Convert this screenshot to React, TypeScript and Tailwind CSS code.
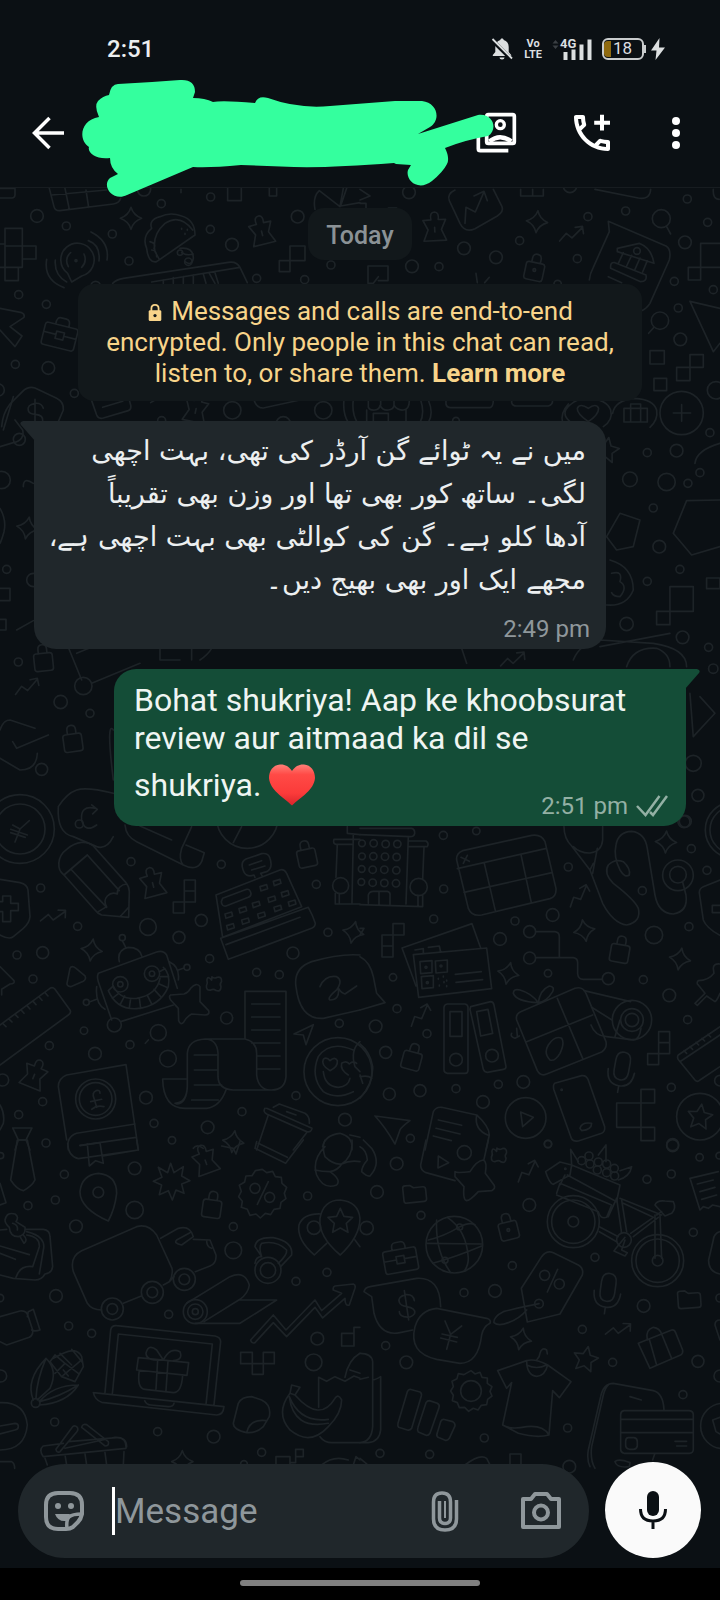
import React from 'react';

// Doodles are drawn at three times their size, tile by tile
const SPARKLE = 'M0-33Q7-9 32 0Q7 9 0 33Q-7 9-32 0Q-7-9 0-33Z';
const PIN = 'M-10-25Q-14-48 2-48Q16-46 12-25L34-24L20 5L34 38L-34 38L-20 5L-34-24ZM0-2V12';
const LOCK =
  'M-28-12Q-28-20-20-20H20Q28-20 28-12V25Q28 33 20 33H-20Q-28 33-28 25ZM-13-20V-32Q-13-46 0-46Q13-46 13-32V-20';
const TREND = 'M-38 18L-15-2L0 14L34-12M14-16H36V6';
const PIXELS = 'M0-50h33v33h-33zM0-17h33v33h-33zM-33 16h33v33h-33z';
const MIC = 'M-22-25Q-22-52 0-52Q22-52 22-25V5Q22 32 0 32Q-22 32-22 5ZM-40 5Q-38 50 0 50Q38 50 40 5M0 50V70';
const STAR = 'M0-38L11-14L37-11L18 7L23 34L0 21L-23 34L-18 7L-37-11L-11-14Z';
const CROSS = 'M-8-10Q-22-24-22-8Q-18 0-22 8Q-22 24-8 20Q0 14 8 20Q22 24 22 8Q16 0 22-8Q22-24 8-20Q0-14-8-20Z';
const CASE =
  'M-50-20Q-50-28-42-28H42Q50-28 50-20V32Q50 40 42 40H-42Q-50 40-50 32ZM-20-28Q-22-50-8-50H8Q22-50 20-28M-50 2H-12M12 2H50M-12-8H12V14H-12Z';
const FOLDER = 'M-34-20Q-34-26-26-26H-12L-2-18H26Q34-18 34-10V18Q34 26 26 26H-26Q-34 26-34 18Z';

type Stamp = [string, number, number, number];

interface Tile {
  x: number;
  y: number;
  dots: number[][];
  stamps: Stamp[];
  paths: string[];
}

const tiles: Tile[] = [
  {
    x: 0,
    y: 180,
    dots: [
      [111, 108, 19], [199, 138, 12], [484, 71, 12], [632, 51, 12], [631, 148, 12], [337, 162, 12], [696, 194, 19],
      [387, 243, 12], [893, 110, 19], [993, 255, 12], [770, 295, 12], [914, 299, 12], [56, 344, 12], [139, 373, 12],
      [46, 553, 12], [145, 564, 19], [223, 640, 12], [697, 691, 26], [970, 691, 26], [-5, 630, 18], [432, 28, 20],
      [485, 722, 12], [850, 732, 22], [228, 242, 3], [565, 245, 11], [540, 218, 8], [287, 318, 14]
    ],
    stamps: [[SPARKLE, 393, 115, 0], [PIN, 785, 155, -14], [CASE, 180, 464, 14], [PIN, 588, 688, 12]],
    paths: [
      'M0 25H45V45Q44 54 36 54H0',
      'M148 25L162 80Q165 93 180 92L340 72Q358 70 362 55M155 45L320 30M195 25L208 88M258 30L266 82',
      'M683 25V62H724V25M808 25V48H830V25M543 28V38',
      'M945 88Q938 50 958 32L1020 80L1030 25M1040 25L1022 78L1080 68',
      'M0 192H15V145H67V198H108V237H67V198H15M67 198V262H0M15 192V302H55V262',
      'M838 242H870V275H838ZM870 198H915V242H870Z',
      'M215 306L203 280A50 50 0 1 1 245 288ZM205 260Q192 235 212 218M252 222Q262 245 245 262',
      'M265 182Q302 195 297 243M273 156Q330 185 321 240M166 240Q162 285 200 306M140 238Q130 300 192 323',
      'M440 205Q425 170 455 145Q445 120 480 110Q510 95 545 108Q585 120 585 165L470 245Q445 250 440 205M465 215Q455 165 495 130Q540 100 578 150M465 215L478 238M450 185Q470 190 462 205M455 210Q470 210 470 230M545 145v3M555 160v3M562 148v3',
      'M540 205Q580 200 580 235Q575 260 555 245M545 218Q560 228 580 222',
      'M338 310Q350 298 370 295L685 247Q710 243 720 262L742 308M455 306L720 262M490 300V310M520 293V310M550 290V310M580 285V310M610 282L618 310M628 280L645 310M645 278L655 310',
      'M0 385L65 398Q75 402 72 412L30 440L66 468L45 500L0 450',
      'M5 740Q8 700 30 672L68 634Q85 618 105 624L170 655Q192 666 190 690L175 725M130 685Q125 668 105 670Q80 675 85 692Q88 702 107 703Q130 706 128 722M105 658V728',
      'M275 662L290 705Q295 718 310 714L385 692Q395 688 392 675L388 660M308 682L368 664M452 668L465 660M762 660Q770 685 790 684L900 660M1032 660Q1028 700 1045 728M1060 660Q1055 700 1072 728'
    ]
  },
  {
    x: 360,
    y: 180,
    dots: [
      [147, 37, 19], [312, 205, 19], [408, 232, 19], [156, 259, 19], [237, 260, 12], [479, 182, 12], [684, 110, 12],
      [652, 236, 12], [797, 93, 12], [982, 57, 12], [1043, 127, 12], [975, 187, 19], [904, 116, 27], [943, 304, 12],
      [1060, 329, 12], [955, 384, 12], [900, 422, 26], [961, 478, 19], [1068, 631, 26], [630, 18, 20], [523, 270, 4],
      [831, 213, 10], [593, 312, 11], [965, 699, 65], [288, 722, 10]
    ],
    stamps: [[SPARKLE, 531, 125, 5], [PIN, 224, 144, -3], [TREND, 634, 160, -8], [LOCK, 524, 268, 12]],
    paths: [
      'M0 28L30 48L0 60M0 70H18V84M85 84H110',
      'M285 30Q260 42 268 62L300 130Q315 160 345 146L412 108Q432 95 426 80L400 28M315 130L318 82L346 96L370 40M342 48L372 34L382 62',
      'M482 28V48H550V28M518 28V48M705 28L835 54Q870 60 872 28M1060 28Q1058 58 1078 58',
      'M920 140L932 162M882 442L866 460',
      'M24 258H84V302H55M24 258V310H40L55 290M348 280L352 308M388 292L374 308',
      'M688 300Q690 280 700 262L748 155L745 124L918 198Q935 208 928 240L870 370Q860 386 845 392',
      'M772 205L838 190Q875 205 882 250L772 215ZM790 218L775 250M815 226L800 258M840 234L825 268M862 242L848 276M765 248L858 285Q862 305 842 305L752 265Q750 245 765 248M745 290L785 308',
      'M1080 190H1022V262H985V300H1022V262H1080M1022 262V300',
      'M990 364L1060 515L1080 490M990 364L1080 385',
      'M870 512H913V552H870ZM990 524H1030V562H990ZM950 562H990V602H950ZM882 595H920V632H882Z',
      'M25 662V682Q30 692 45 690Q58 688 60 676Q68 692 85 690Q100 688 102 676Q112 692 130 690Q148 688 148 662M62 662V676M102 662V676M20 690V726M138 690V726M40 722V700H85V726',
      'M182 660Q195 700 180 728M205 660Q222 700 205 728M258 660V672Q260 683 272 683H390Q400 680 400 660M455 660V668Q458 678 470 678H565Q578 675 578 660',
      'M630 725Q600 700 630 675Q650 655 685 655Q740 658 752 690Q760 720 730 740M758 700Q765 660 825 655Q880 658 890 690Q895 720 870 742M608 728Q600 700 625 672',
      'M685 725Q650 700 652 685Q660 668 685 685Q708 668 716 685Q716 705 685 725M792 685H862V726H792ZM812 685V726M842 685V726M812 685V672H842V685M940 699H992M965 674V724'
    ]
  },
  {
    x: 0,
    y: 820,
    dots: [
      [238, 12, 12], [393, 125, 12], [664, 133, 12], [122, 204, 12], [233, 319, 12], [444, 321, 25], [604, 301, 18],
      [537, 352, 18], [51, 405, 12], [128, 398, 18], [99, 477, 12], [629, 416, 12], [879, 399, 18], [984, 337, 12],
      [949, 193, 12], [770, 457, 12], [838, 464, 12], [680, 594, 18], [252, 632, 11], [148, 677, 12], [285, 701, 19],
      [390, 674, 12], [475, 638, 24], [504, 716, 25], [438, 833, 19], [128, 845, 12], [56, 884, 12], [138, 969, 12],
      [462, 910, 12], [516, 961, 11], [623, 922, 19], [726, 875, 12], [888, 827, 12], [1018, 610, 12], [1035, 899, 19],
      [8, 780, 18], [60, 27, 75], [60, 27, 103], [742, -7, 92], [1022, 197, 24], [361, 493, 23], [361, 493, 8],
      [456, 461, 23], [456, 461, 8], [343, 615, 21], [367, 353, 9], [561, 442, 9], [259, 547, 9], [287, 837, 60],
      [287, 837, 49], [1014, 755, 102]
    ],
    stamps: [
      [PIN, 458, 190, -15], [TREND, 160, 286, 2], [PIXELS, 553, 230, 0], [LOCK, 920, 108, -12], [SPARKLE, 275, 390, 8],
      [SPARKLE, 1060, 337, 12], [CROSS, 642, 491, 5], [PIN, 103, 765, 22], [SPARKLE, 700, 965, 8]
    ],
    paths: [
      'M38 15L60 27L88 2M60 27L45 66M32 28L82 45M32 38L76 52',
      'M262 105L192 165C170 150 170 110 200 88C230 62 262 62 280 78L378 188Q388 200 388 215L386 292L305 285Q292 280 285 270L192 165M215 150L320 262M262 105L358 212M295 275L320 260C305 235 330 212 352 222C350 205 365 193 380 192M386 262L362 288',
      'M0 178L60 188Q82 194 84 210L90 290Q88 310 70 325L40 350Q28 360 0 345M0 245H8V228H32V250H55V272H32V305H8V275H0',
      'M375 15Q378 50 410 65L550 135Q590 155 605 125L613 98L558 75M575 20L545 85Q535 120 550 135M420 18L515 60M725 20L700 68',
      'M648 225L840 150Q852 146 860 160L905 260L668 352ZM662 355L925 262Q938 285 946 310Q946 320 935 325L685 418ZM678 374L900 292M765 172L762 165Q735 175 728 145Q722 125 738 117L785 101Q805 98 810 115Q820 145 800 155L782 160L788 170M748 135L785 122M755 150L795 138',
      'M668 235L740 208Q750 206 753 220Q754 228 745 232L678 258Q665 260 664 245ZM780 200l20-6 3 12-20 7zM820 184l20-6 3 12-20 7zM804 234l20-6 3 12-20 7zM844 218l20-6 3 12-20 7zM757 250l20-6 3 12-20 7zM717 266l20-6 3 12-20 7zM675 282l20-6 3 12-20 7zM865 246l20-6 3 12-20 7zM822 262l20-6 3 12-20 7zM773 282l20-6 3 12-20 7zM725 300l20-6 3 12-20 7zM680 317l20-6 3 12-20 7z',
      'M1002 58Q998 72 1008 73H1056M1080 58H1002M1012 73L1008 172M1060 45L1056 252M1006 220V252H1080M1018 222V252M1042 20V40L1080 44',
      'M295 460L470 396Q490 390 500 405L532 505M295 460Q290 470 295 485L335 600M362 605L520 555M358 425Q350 390 385 382Q420 382 426 410M367 362L378 384M508 425Q540 440 535 480M535 450L552 444M290 500Q285 550 315 568M268 546L290 538',
      'M325 512Q350 570 410 566Q480 560 505 500Q512 460 490 442M340 498Q360 540 410 535Q470 525 480 475M325 512L340 498M337 535L356 520M360 555L374 528M388 564L392 536M422 565L418 534M455 552L442 526M482 530L462 508M500 502L478 492M506 470L482 470M495 446L478 455',
      'M512 525L552 522Q565 518 572 505Q590 485 600 500V545L626 572Q630 585 615 585L575 582Q560 590 552 605Q542 618 536 602L535 565L512 540Q505 528 512 525',
      'M210 445Q215 435 228 445L255 468Q260 478 250 484L212 500Q200 498 201 490Z',
      'M0 440L42 482Q45 492 30 492L5 508V525M0 615L150 505Q158 500 165 508L210 570Q215 578 205 585L0 735M10 612L18 620M28 598L36 606M46 584L54 592M64 571L72 580M82 558L90 567M100 545L108 554M118 532L126 541M136 519L144 528',
      'M735 514H858V770Q855 810 815 810H700Q655 808 654 770V700Q652 658 615 657Q565 660 562 700V800Q560 850 525 850M615 657H735Q770 665 770 700V765Q775 808 810 810M735 514V657M755 552H840M755 591H840M755 630H840M755 669H840M772 708H840M772 747H840M562 777H488Q490 865 555 865H620Q660 860 678 810M583 705H652M583 750H652M583 795H665M575 840H655M530 852Q560 850 562 800',
      'M1080 405Q1020 400 935 425Q880 445 888 500Q900 600 970 595L1080 570M960 500Q975 465 1010 470Q1030 480 1010 510Q980 535 990 540Q1020 540 1015 505Q1025 520 1035 522L1070 498',
      'M882 642L940 614L918 674L910 645ZM445 660L436 670',
      'M1060 690Q990 660 955 710Q930 770 970 815Q1010 840 1060 815M970 755Q975 800 1015 802Q1045 800 1050 775M990 752Q962 735 970 718Q980 710 990 722Q1005 708 1012 722Q1015 740 990 752M1045 765Q1020 750 1025 730Q1040 720 1048 732Q1060 720 1070 730M1080 665Q1050 690 1065 740L1080 755',
      'M200 960L175 800Q175 775 200 765L378 734L415 990M205 990Q198 950 230 940L405 912M240 976L408 952M300 820Q300 808 288 812Q275 818 282 835L290 862M272 845L305 838M275 868Q290 855 312 860',
      'M38 924H96L78 960H55ZM55 960L45 990M78 960L90 990M0 855Q15 880 10 910L0 930',
      'M795 865Q788 875 800 882L920 935Q935 938 936 925L800 865M820 862L838 852L915 880Q930 890 928 910M805 885L770 990M920 938L880 990M860 875L888 885M580 985Q590 970 610 985M968 980Q975 945 1020 940Q1060 950 1056 990M1050 945L1080 952'
    ]
  },
  {
    x: 360,
    y: 820,
    dots: [
      [250, 46, 12], [349, 33, 11], [251, 207, 12], [221, 297, 12], [420, 357, 19], [465, 303, 12], [578, 285, 19],
      [625, 141, 12], [847, 212, 12], [994, 86, 12], [1041, 151, 12], [987, 320, 12], [882, 345, 26], [99, 472, 11],
      [509, 335, 18], [509, 414, 18], [745, 476, 18], [564, 460, 11], [850, 479, 12], [928, 526, 19], [983, 599, 12],
      [111, 566, 12], [47, 619, 19], [201, 641, 12], [77, 697, 18], [88, 822, 18], [180, 812, 18], [288, 806, 12],
      [415, 793, 12], [490, 786, 19], [369, 846, 19], [151, 955, 12], [564, 972, 11], [934, 802, 12], [938, 974, 18],
      [176, 201, 26], [288, 719, 19], [396, 707, 19], [497, 894, 61], [1020, 890, 70], [816, 600, 59], [816, 600, 34],
      [816, 600, 20], [954, 166, 46], [954, 164, 25], [1120, 30, 84], [1120, 30, 70], [972, 5, 18], [6, 70, 10],
      [41, 70, 11], [77, 72, 11], [112, 72, 11], [6, 109, 10], [40, 109, 11], [75, 110, 11], [110, 111, 11], [5, 147, 10],
      [38, 149, 11], [73, 149, 11], [109, 151, 11], [4, 186, 10], [38, 188, 11], [73, 189, 11], [108, 190, 11],
      [198, 442, 3], [243, 438, 3], [202, 488, 3], [605, 809, 2], [1080, 782, 16]
    ],
    stamps: [
      [SPARKLE, 918, 66, 3], [SPARKLE, 673, 332, -10], [SPARKLE, 445, 460, 12], [SPARKLE, 960, 417, 10],
      [TREND, 655, 226, -30], [TREND, 178, 584, -30], [PIXELS, 896, 685, 0], [LOCK, 780, 394, 10], [LOCK, 156, 716, 15],
      [MIC, 785, 748, 10], [STAR, 1020, 890, 8]
    ],
    paths: [
      'M0 25H155Q165 28 164 40Q163 50 150 50L0 44M145 50L138 252M148 63H198Q208 70 202 80H148M192 82L188 178M0 254L188 260V225M174 226V260M25 250V225Q28 214 40 214H82Q92 216 90 228V252M57 214V252',
      'M290 120Q288 100 308 92L515 46Q545 42 555 65L588 205Q590 230 570 236L365 285Q335 290 325 265ZM292 146L556 86M312 217L576 158M373 130L406 272M483 104L514 248M303 112L328 124M322 106L310 130',
      'M612 20Q612 55 635 78L690 150L728 250Q760 310 800 315Q845 305 835 265Q825 240 760 190Q730 160 745 135Q765 115 790 125Q812 145 808 165Q795 175 780 150Q760 110 768 75Q775 35 815 34Q855 38 862 85L885 225Q895 280 940 282Q985 275 978 225L968 186M728 20V60Q725 95 690 99Q660 100 640 80M712 85L698 160M690 150L700 130',
      'M66 345H99V411H66ZM66 378H99M99 311H132V345H99ZM0 325L12 325L0 345',
      'M168 498L126 384L336 311L362 384M160 404L380 384L395 506L176 532ZM180 425L216 422V458L182 461ZM226 423L262 420V456L228 459ZM184 470L220 467V503L186 506ZM286 463L364 455M288 487L368 479M165 390L190 386V400M205 382L238 378L242 396M235 475v3M250 468v3M260 480v3M238 495v3M252 485v3M260 497v3',
      'M527 335H585Q598 337 598 350V413M527 413H640Q653 415 653 428V462Q655 478 670 478H727',
      'M262 552H315Q324 554 324 562V750Q324 760 315 760H262Q252 758 252 750V562Q253 553 262 552ZM270 575H306V649H270ZM332 560L392 545Q400 545 402 555L438 740Q438 747 430 748L382 757Q373 757 370 748L330 568ZM350 575L384 568L398 640L362 648Z',
      'M470 600Q466 582 482 575L645 505Q668 498 678 520L738 665Q742 685 725 696L560 762Q542 770 532 752ZM498 666L698 585M592 535L668 715M535 548Q470 545 460 520Q460 505 480 510Q515 520 535 548Q540 510 568 498Q585 500 578 515Q560 545 535 548M570 720Q550 700 565 675Q585 645 605 655Q615 670 600 700Q585 725 570 720M470 625L472 648M455 640Q450 650 465 655L478 648',
      'M672 512L812 545M695 562L756 600M693 615Q705 648 740 650L820 660Q838 660 843 625M765 650L780 600',
      'M0 410Q30 425 40 470L50 520L75 548L0 570M0 672Q30 695 38 740Q40 790 0 835M0 770Q25 765 35 775M0 765L8 790',
      'M482 876L520 892L488 920ZM584 790L665 767Q678 765 684 778L734 920Q736 935 725 940L655 963Q640 966 634 955L582 810Q578 795 584 790M660 925Q665 905 695 910Q695 930 665 932Z',
      'M770 849H843V922H770ZM843 808H884V849H843ZM843 922H884V962H843Z',
      'M45 888L150 902Q125 920 120 930L105 972Q75 920 45 888',
      'M195 990L220 875Q228 860 245 862L350 885Q388 920 388 945L378 990M350 885Q342 930 385 946M235 900L305 916M228 925L300 942M220 948L274 962',
      'M1080 180L1030 200Q1018 205 1018 218L1030 300Q1040 325 1080 346M1080 256H1057V278H1080M1080 432Q1060 430 1060 445L1062 460Q1045 482 1015 482Q1008 490 1015 495L1035 520L1005 550L1012 556L1040 528L1065 545Q1072 540 1080 520',
      'M1080 620L955 705Q950 712 956 720L1005 780Q1012 788 1020 780L1080 740M962 724L1080 645M972 692L980 700M990 680L998 688M1008 667L1016 675M1026 655L1034 663M1044 643L1052 651'
    ]
  },
  {
    x: 0,
    y: 1140,
    dots: [
      [193, 103, 12], [84, 197, 12], [166, 180, 12], [404, 85, 19], [404, 210, 26], [228, 259, 19], [168, 468, 19],
      [506, 523, 12], [206, 558, 12], [275, 580, 12], [700, 260, 12], [700, 331, 25], [923, 168, 12], [981, 397, 12],
      [888, 424, 12], [952, 596, 19], [941, 667, 25], [164, 846, 12], [473, 875, 12], [641, 890, 19], [785, 937, 12],
      [2, 708, 18], [0, 474, 11], [2, 47, 9], [295, 157, 16], [765, 145, 15], [809, 172, 15], [337, 507, 33], [337, 507, 16],
      [457, 457, 33], [457, 457, 16], [553, 418, 33], [553, 418, 16], [586, 515, 36], [586, 515, 23], [586, 515, 9],
      [804, 391, 39], [804, 391, 23], [942, 263, 20], [107, 789, 13], [732, 972, 10]
    ],
    stamps: [[PIN, 616, 62, -20], [LOCK, 636, 200, 8], [STAR, 1021, 243, 0], [SPARKLE, 547, 965, 0]],
    paths: [
      'M52 0L32 120Q50 148 70 152Q95 140 105 120L82 0ZM0 130L18 188L0 195',
      'M203 10Q205 50 235 56L415 30L410 0M240 17L300 8M262 12L268 78L287 62L310 70L300 8M310 48L415 30',
      'M325 243Q240 205 240 155Q245 105 295 100Q350 105 350 160Q345 205 325 243',
      'M512 70L522 98L550 80L545 108L570 122L545 132L552 160L528 150L517 180L505 152L478 164L485 135L460 124L486 112L475 82L503 98Z',
      'M787 88L800 98L818 94L826 110L844 112L846 130L860 142L853 160L858 176L843 187L840 205L822 208L812 224L796 220L781 234L768 222L750 226L742 208L724 202L727 184L716 170L724 154L718 136L734 126L738 108L756 107L766 92ZM805 125L772 193',
      'M770 5L765 25L857 70L910 0M775 10L862 52M975 0Q965 20 975 50Q1000 75 1025 72Q1060 50 1056 0M975 20Q935 60 950 105Q970 150 1010 135Q1025 120 990 95Q1015 90 1025 72M945 90Q965 95 990 95M1025 72Q1050 60 1080 65M665 18L700 25L708 42M708 42L720 5',
      'M0 318L88 344M0 340L46 358M0 270L20 268M75 268H130Q150 270 150 290L158 380Q155 400 135 402Q125 420 105 420L40 415L0 405M80 275Q140 290 130 330L118 402M80 285Q120 290 118 320L98 380Q60 375 48 412M15 240Q20 215 45 222Q58 230 48 245L75 262Q78 285 55 290Q30 290 28 262Q15 250 15 240M38 250Q55 255 52 270M60 290L72 310Q85 300 70 285',
      'M305 510Q275 510 262 490L220 395Q208 350 245 332L410 260Q445 250 470 285L516 385Q520 405 508 425L490 435M370 490L424 468M482 295L535 265Q570 255 580 290L545 315Q520 310 530 300L570 278M580 298L630 300L648 345Q650 370 630 378L586 395M620 302Q620 320 635 325M508 425L522 410',
      'M560 490L690 410Q735 390 748 435Q745 460 720 478L612 545M720 480H830L720 550H586',
      'M765 370Q768 350 785 350L765 320Q768 290 820 293Q880 305 875 345L842 380M785 350Q775 320 785 310Q830 300 860 330Q862 345 835 370',
      'M943 345Q890 300 897 255Q910 220 962 222M943 345L980 310M1021 345Q955 290 960 235Q970 180 1021 180Q1075 185 1080 235Q1080 290 1021 345M1065 300L1080 320',
      'M752 600L820 525L858 570L945 480L965 512L1025 460L1000 450Q998 440 1005 438L1060 432Q1068 435 1065 445L1048 495Q1035 500 1035 475L968 534L945 502L860 590L820 548L765 608Q755 612 752 600',
      'M0 530L60 513Q80 510 85 530L98 570Q100 585 88 592L20 615L0 605M82 530L85 515L100 508L120 570Q105 575 95 570',
      'M315 758L332 570Q335 555 350 557L645 588Q662 592 662 605L642 795M337 762L355 582L637 612L618 794M280 758L672 800Q670 825 650 825L305 787Q285 780 280 758M434 782Q440 795 452 795L505 800Q520 800 522 790',
      'M415 653L566 668L561 706L410 690ZM473 660L468 748M504 664L498 752M418 692Q410 745 435 748L520 758Q545 758 548 705M490 660Q440 665 438 640Q445 610 470 630L490 660Q510 620 540 635Q550 660 520 662',
      'M722 637H757V671H722ZM757 671H790V703H757ZM790 637H823V671H790ZM1025 580H1062V618H1025ZM1062 580V562H1080',
      'M100 780Q75 720 138 655Q175 690 150 745L112 780M138 655Q110 720 108 775M118 785Q160 735 235 735Q200 790 118 795M118 785Q180 770 235 735M150 665L185 710L225 725M160 655L190 640Q230 620 245 650L250 680L225 725M150 665L165 645L195 670L165 700M195 670L235 700M185 710L245 660M180 640L215 675M215 628L248 668M190 690L205 708',
      'M0 788Q75 785 82 855Q75 930 0 930M0 858L45 850Q55 850 55 860Q55 868 45 870L0 882',
      'M168 928L218 860Q225 855 232 862Q236 870 230 876L180 935Q170 940 168 928M245 862Q248 850 260 854L325 905Q328 918 315 918ZM195 925L345 892M130 950Q115 930 130 918L190 910M205 905L350 893Q380 892 378 925L130 950M345 892Q380 890 380 920M135 955L142 975M195 945L200 975M255 942L260 975M315 938L320 975M372 935L370 975M0 965H35Q44 970 44 985',
      'M715 790Q725 770 755 770L785 780Q815 795 808 830L790 860Q770 880 740 878Q700 870 700 850ZM740 878Q750 835 800 842',
      'M875 735L900 742L885 765L870 760ZM870 760Q825 820 870 870Q930 920 985 860Q1025 820 1025 780Q1015 760 1005 775Q960 850 885 765M868 770Q880 870 985 850M868 770Q900 850 985 838',
      'M956 802V712L980 724L1005 710L1035 724L1062 708L1080 715M1035 712Q1045 660 1080 640M1050 690L1080 700M960 890Q975 910 1000 908H1080',
      'M887 928H910V950H887ZM828 950H870V975M828 950V975M870 968H887V950M965 975Q1000 945 1045 960M1060 975L1068 950L1080 960'
    ]
  },
  {
    x: 360,
    y: 1140,
    dots: [
      [110, 71, 19], [51, 156, 19], [183, 226, 12], [313, 38, 21], [564, 12, 11], [508, 195, 19], [457, 377, 12],
      [705, 352, 12], [861, 118, 12], [934, 102, 12], [1019, 52, 11], [1000, 277, 12], [312, 458, 12], [405, 453, 19],
      [77, 617, 12], [139, 667, 19], [667, 568, 12], [851, 498, 19], [758, 667, 12], [1014, 664, 18], [969, 764, 12],
      [623, 864, 12], [373, 894, 12], [209, 943, 12], [60, 940, 12], [628, 980, 19], [938, 17, 18], [1078, 47, 10],
      [640, 245, 78], [640, 245, 65], [640, 245, 16], [893, 362, 78], [893, 362, 65], [893, 362, 16], [792, 300, 22],
      [283, 314, 85], [255, 361, 9], [299, 261, 9], [554, 406, 15], [598, 432, 15], [537, 491, 13], [333, 753, 31],
      [20, 264, 20], [1080, 708, 18], [1080, 474, 12], [445, 270, 4], [687, 48, 12], [665, 62, 12], [690, 72, 12],
      [715, 66, 12], [740, 72, 12], [712, 90, 12], [740, 98, 12], [763, 85, 12], [764, 108, 12], [1090, 858, 68], [616, 86, 2]
    ],
    stamps: [
      [CROSS, 417, 45, 5], [TREND, 500, 92, -28], [FOLDER, 164, 161, -6], [LOCK, 445, 266, -14], [CASE, 121, 356, -10],
      [MIC, 743, 452, 8], [FOLDER, 988, 478, -4], [TREND, 775, 566, 2], [SPARKLE, 483, 597, 12], [STAR, 677, 657, 12]
    ],
    paths: [
      'M0 20Q20 30 22 60Q5 80 5 95Q20 110 30 108Q65 70 35 25L10 0',
      'M198 0L182 75Q182 92 198 98L285 122M385 0L372 58M235 48L266 68L234 84Z',
      'M285 95Q290 100 330 95Q350 62 370 60Q382 65 376 100L402 135Q408 145 395 152L355 155Q330 182 320 182Q308 180 312 140L285 110Z',
      'M557 95L600 66L635 75L630 105L580 133Q568 130 557 95M635 75L632 28L655 65M715 45L738 15V65M780 92L815 80Q810 110 775 120M635 75L780 135L770 185L622 105M600 135L615 105M590 160L600 130L755 195L740 232Q720 238 715 215L590 165M770 175L745 230',
      'M770 175L785 280M785 180L800 275M780 175L905 225M790 190L880 232L812 280M718 260L775 290M718 275L770 305M885 225L885 355M900 225L905 355M820 290L895 232M885 195Q890 180 915 183L940 185Q950 205 935 220L915 228ZM905 215L890 225M795 292L768 325L762 333L795 348L802 338L785 330L795 300',
      'M990 115L1075 95M990 115L1020 210L1030 200L1045 205L1058 195L1080 200M1012 132L1060 120M1020 155L1065 142M1025 178L1070 165M1080 275Q1062 280 1060 300L1046 360Q1045 395 1080 402',
      'M200 310L365 312M230 240Q225 330 270 395M262 232Q320 270 325 355Q325 375 315 390M205 300Q250 290 300 260Q330 245 345 255M218 370Q290 350 365 318',
      'M12 455Q15 442 30 440L170 415Q240 410 242 500M12 455L35 470L42 520Q60 590 120 578L158 570M163 482Q160 462 138 464Q112 470 118 487Q122 498 140 500Q168 505 164 520Q155 535 132 530Q118 525 118 515M133 452L146 540',
      'M165 560Q180 510 230 505L380 535Q395 540 390 550Q370 560 365 585Q355 670 300 670L230 658Q145 640 165 560M255 543L272 583L305 558M272 583L260 628M246 582L292 592M242 594L290 606',
      'M484 445L545 350Q560 330 580 338L655 375Q672 385 667 405L600 522L502 546ZM593 388L562 456M537 491Q490 500 430 515Q400 530 402 548Q415 560 445 548Q480 535 500 510',
      'M835 610L935 570Q943 568 947 578L968 630Q970 640 962 645L870 685ZM862 600Q855 570 880 562Q900 565 905 582M868 598L890 675M905 582L935 655',
      'M413 692L500 662Q500 705 530 709Q555 708 563 675L633 725L598 773L578 752L567 885M413 692L440 745L455 728L428 855Q450 870 500 860Q550 855 567 885Q530 895 475 880L428 855M500 675Q530 690 560 675M530 660Q540 650 540 640Q545 620 560 630L562 642M500 662Q525 655 563 675',
      'M333 692L345 702L360 697L366 712L382 714L382 730L396 740L390 754L396 768L383 778L380 794L364 796L354 810L340 805L326 814L314 802L298 803L292 788L277 782L280 766L272 753L280 740L276 724L291 716L295 701L312 704Z',
      'M150 748L180 756Q186 760 184 768L155 865Q150 872 142 870L116 862Q112 858 114 850L142 755Q145 748 150 748M208 782L232 790Q240 795 237 803L210 880Q205 888 198 886L175 876Q171 870 174 862L198 788Q202 782 208 782M250 838L278 845Q286 850 285 858L268 895Q262 904 254 900L234 892Q228 888 232 878L242 845Q245 838 250 838',
      'M0 640Q35 640 38 665V860Q35 905 0 908M38 720Q45 720 62 710V870Q58 905 25 908H0M0 718L25 712',
      'M690 980Q680 960 685 930L722 770Q730 730 760 730L880 752Q910 760 912 810M745 735Q735 745 730 765L695 920Q690 960 705 985M810 770L844 780M792 812H988Q1000 814 1000 824V928Q1000 940 988 940H792Q782 938 782 928V824Q782 814 792 812ZM782 838H1000M782 878H1000M805 893H822Q832 895 832 905V918Q830 928 820 928H808Q797 926 797 915V903Q798 893 805 893M945 904H980M950 918H980M885 940L878 960M765 965Q775 955 810 968L808 980Q770 985 765 965M1080 540Q1065 540 1065 555L1080 600M1080 832L1058 840L1068 875L1080 882',
      'M450 972V942H483V972M315 975Q360 940 380 955L390 975M0 955L20 972'
    ]
  },
  {
    // narrow strips that show beside the bubbles
    x: 0,
    y: 400,
    dots: [
      [58, 118, 18], [20, 508, 12], [100, 540, 20], [5, 240, 26], [55, 786, 12], [250, 858, 26], [182, 906, 20],
      [270, 940, 12], [125, 1108, 18], [1942, 158, 12], [2030, 152, 19], [1890, 238, 22], [2000, 246, 26], [2064, 250, 12],
      [1960, 324, 12], [1978, 440, 19], [2040, 508, 12], [1942, 544, 12], [1880, 672, 20], [2048, 712, 19], [2126, 742, 12],
      [2100, 218, 12], [2130, 98, 12], [2080, 1090, 24], [2094, 1186, 18], [2056, 1264, 18], [2140, 806, 14]
    ],
    stamps: [
      [LOCK, 130, 780, -6], [TREND, 80, 858, -12], [LOCK, 218, 1022, -8], [SPARKLE, 82, 384, 10], [TREND, 1538, 776, -6],
      [STAR, 1820, 150, 10]
    ],
    paths: [
      'M10 90L40 -10M0 140L40 128Q75 120 68 90L45 60M70 260Q70 230 100 250M0 565H30V602H0M0 658H18V690H0M50 690L100 662M0 325Q20 360 12 395Q5 420 0 430',
      'M200 730L245 840M230 760L340 715M275 850L420 790M280 640L320 720L420 700M480 670V780H540M575 660V780M600 780Q660 740 640 680M1110 670L1180 700M1360 670L1400 790M1390 710L1440 700M1400 740L1450 725',
      'M0 990Q10 960 30 960L105 985M38 1025L50 1045L145 1005M112 1060Q110 1110 60 1110L0 1075M340 990Q318 960 340 1140',
      'M175 1220Q200 1180 230 1170Q260 1160 340 1180M175 1220Q170 1300 220 1310L290 1340Q320 1350 340 1310M285 1225Q240 1215 245 1260Q255 1300 290 1275M275 1215L292 1228L278 1242',
      'M2160 300L2060 302L2020 400L2075 465L2160 440M1860 340L1920 360L1900 440L1850 450L1820 410ZM1830 480Q1900 500 1900 570Q1880 620 1820 615M1835 520Q1870 510 1860 545Q1885 560 1860 590Q1840 590 1835 578',
      'M2010 560H2080V634H2010ZM1970 634H2010V674H1970ZM2120 534H2160V566H2120ZM2085 190Q2090 150 2160 130M2070 880L2080 1010L2145 940L2100 890',
      'M1720 780Q1740 730 1800 720L1960 730Q2060 745 2060 800M1800 740L2010 700M1880 800Q1900 740 1970 745Q2010 760 2010 800'
    ]
  }
];

const Wallpaper: React.FC = () => (
  <svg
    className="absolute inset-0 h-full w-full"
    viewBox="0 188 720 1380"
    preserveAspectRatio="xMidYMin slice"
    fill="none"
    stroke="#1d2327"
    strokeWidth="5"
    strokeLinecap="round"
    strokeLinejoin="round"
    aria-hidden="true"
  >
    {tiles.map((tile, i) => (
      <g key={i} transform={`translate(${tile.x} ${tile.y}) scale(0.3333)`}>
        {tile.dots.map(([cx, cy, r], j) => (
          <circle key={j} cx={cx} cy={cy} r={r} />
        ))}
        {tile.stamps.map(([d, x, y, turn], j) => (
          <path key={j} d={d} transform={`translate(${x} ${y}) rotate(${turn})`} />
        ))}
        {tile.paths.map((d, j) => (
          <path key={j} d={d} />
        ))}
      </g>
    ))}
  </svg>
);

const StatusBar: React.FC = () => (
  <div className="flex h-[97px] items-center justify-between pr-[54px] pl-[107px] text-2xl text-[#eceeef]">
    <span className="font-medium">2:51</span>
    <div className="flex items-center text-[#dcdfe0]">
      <svg className="mr-2.5 h-6 w-6" viewBox="0 0 24 24" fill="currentColor" aria-label="Muted">
        <path d="M12 1.5c1 0 1.700.7 1.700 1.600 3.200.8 5 3.600 5 6.900v5l2.500 3v1H2.800v-1l2.500-3v-5c0-3.300 1.800-6.100 5-6.900 0-.9.700-1.600 1.700-1.600z" />
        <path d="M9.500 20.500h5a2.500 2 0 0 1-5 0z" />
        <path d="M1.500 2.500l20 20" stroke="#0b1014" strokeWidth="4" />
        <path d="M2.500 2l19.500 19.500" stroke="currentColor" strokeWidth="1.800" />
      </svg>
      <span className="mr-2.5 flex flex-col text-center text-[11px] leading-[11px] font-bold">
        <span>Vo</span>
        <span>LTE</span>
      </span>
      <svg className="mr-2.5 h-6 w-10" viewBox="0 0 40 24" fill="currentColor" aria-label="4G signal">
        <path d="M3.500 3l3 3.500h-6zM3.500 12l3-3.500h-6z" fill="#3a3f43" />
        <path d="M11.500 15h4v8h-4zM19.500 12.500h4v10.500h-4zM27.500 7.500h4v15.500h-4zM35.500 2.500h4v20.500h-4z" />
        <text x="8" y="11" fontSize="13" fontWeight="700" fontFamily="Roboto, sans-serif">4G</text>
      </svg>
      <span className="flex h-[22px] w-[42px] items-center rounded-md border-2 border-[#c9cccd]">
        <span className="h-4 w-[7px] rounded-l-sm bg-[#8f6a10]" />
        <span className="pl-0.5 text-[17px] leading-none">18</span>
      </span>
      <span className="h-2 w-0.5 bg-[#c9cccd]" />
      <svg className="ml-1 h-6 w-4" viewBox="0 0 16 24" fill="currentColor" aria-label="Charging">
        <path d="M9.500 1L1 13.500h5.500L5.500 23 15 10.500H9z" />
      </svg>
    </div>
  </div>
);

const Header: React.FC = () => (
  <header className="relative z-10 border-b border-[#171c20] pb-[18px]">
    <StatusBar />
    <div className="flex h-[72px] items-center justify-between pr-[15px] pl-6">
      <button className="p-1" aria-label="Back">
        <svg className="h-10 w-10" viewBox="0 0 40 40" fill="none" stroke="#fff" strokeWidth="3.500">
          <path d="M36 20H7M21.500 5L6.500 20l15 15" />
        </svg>
      </button>
      <div className="flex items-center">
        <button className="mr-12" aria-label="Contact">
          <svg className="h-12 w-12" viewBox="36 267 144 144" fill="none" stroke="#fff" strokeWidth="11">
            <rect x="80" y="284" width="83" height="86" rx="5" />
            <path d="M55 345v41q0 6 6 6h84" />
            <circle cx="121" cy="314" r="12" strokeWidth="10" />
            <path d="M88 364q32-25 66 0" strokeWidth="13" />
          </svg>
        </button>
        <button className="mr-8" aria-label="Add call">
          <svg className="h-12 w-12" viewBox="0 0 24 24" fill="#fff">
            <path d="M6.540 5c.06.89.21 1.760.45 2.590l-1.200 1.200c-.41-1.200-.67-2.470-.76-3.790h1.510m9.860 12.020c.85.24 1.720.39 2.600.45v1.490c-1.320-.09-2.590-.35-3.800-.75l1.200-1.190M7.500 3H4c-.55 0-1 .45-1 1 0 9.390 7.610 17 17 17 .55 0 1-.45 1-1v-3.490c0-.55-.45-1-1-1-1.240 0-2.450-.2-3.570-.57-.1-.04-.21-.05-.31-.05-.26 0-.51.1-.71.29l-2.200 2.200c-2.830-1.450-5.150-3.760-6.590-6.590l2.200-2.200c.28-.28.36-.67.25-1.020C8.700 6.450 8.500 5.250 8.500 4c0-.55-.45-1-1-1z" />
            <path d="M17 2.900v7.900M13.100 6.850h7.900" stroke="#fff" strokeWidth="2" />
          </svg>
        </button>
        <button aria-label="More options">
          <svg className="h-12 w-[57px]" viewBox="0 0 57 48" fill="#fff">
            <circle cx="28" cy="12" r="4" />
            <circle cx="28" cy="24" r="4" />
            <circle cx="28" cy="36" r="4" />
          </svg>
        </button>
      </div>
    </div>
    {/* Marker strokes over the contact name */}
    <svg className="pointer-events-none absolute top-0 left-0 h-[200px] w-[500px]" viewBox="0 0 500 200" fill="#34ff9e" aria-hidden="true">
      <path d="M118 84L152 82L180 80Q195 79 195 92L193 98Q205 98 213 102Q222 100 255 103Q258 95 268 98Q298 109 330 106L395 101H422C438 103 441 120 430 127L418 134L478 115C494 113 498 130 488 136Q465 140 445 148Q450 158 447 164Q443 172 432 181C418 192 405 180 408 170L411 165L396 164L394 163Q330 168 294 167L241 165Q210 168 193 167L127 195C113 202 101 186 110 178L118 174Q110 168 110 158C97 160 87 153 89 147C78 140 80 120 99 117Q94 106 98 101Q103 96 109 95Q111 84 118 84Z" />
    </svg>
  </header>
);

const urduLines = [
  'میں نے یہ ٹوائے گن آرڈر کی تھی، بہت اچھی',
  'لگی۔ ساتھ کور بھی تھا اور وزن بھی تقریباً',
  'آدھا کلو ہے۔ گن کی کوالٹی بھی بہت اچھی ہے،',
  'مجھے ایک اور بھی بھیج دیں۔'
];

const IncomingMessage: React.FC = () => (
  <article className="relative mr-[114px] ml-[34px] rounded-[22px] rounded-tl-none bg-[#20272b] px-5 pt-2 pb-1">
    <svg className="absolute top-0 -left-[14px] h-5 w-[15px]" viewBox="0 0 15 20" fill="#20272b" aria-hidden="true">
      <path d="M15 0H3Q-1 1 1 4L15 20z" />
    </svg>
    <p dir="rtl" lang="ur" className="font-['DejaVu_Sans',sans-serif] text-[27px] leading-[43px] text-[#eceff0]">
      {urduLines.map((line) => (
        <span key={line} className="block whitespace-nowrap">{line}</span>
      ))}
    </p>
    <time className="-mr-1 block pt-3 text-right text-2xl leading-8 text-[#8f979b]">2:49 pm</time>
  </article>
);

const Heart: React.FC = () => (
  <svg className="mt-[7px] inline-block h-[42px] w-[46px] align-[-10px]" viewBox="0 0 46 42" role="img" aria-label="Red heart">
    <defs>
      <linearGradient id="heart" x1="0" y1="0" x2="0" y2="1">
        <stop offset="0" stopColor="#ff8078" />
        <stop offset="0.25" stopColor="#ff4a46" />
        <stop offset="0.7" stopColor="#fb3b3a" />
        <stop offset="1" stopColor="#d9242b" />
      </linearGradient>
    </defs>
    <path
      d="M23 7C20 2 15 0 11 0.500C4 1 0 7 0 14C1 26 14 33 23 41.500C32 33 45 26 46 14C46 7 42 1 35 0.500C31 0 26 2 23 7Z"
      fill="url(#heart)"
    />
  </svg>
);

const OutgoingMessage: React.FC = () => (
  <article className="relative mt-5 mr-[34px] ml-[114px] rounded-[22px] rounded-tr-none bg-[#144d37] px-5 pt-3 pb-5">
    <svg className="absolute top-0 -right-[14px] h-5 w-[15px]" viewBox="0 0 15 20" fill="#144d37" aria-hidden="true">
      <path d="M0 0h12q4 1 2 4L0 20z" />
    </svg>
    <p className="text-[32px] leading-[38px] text-[#eff5f2]">
      Bohat shukriya! Aap ke khoobsurat
      <br />
      review aur aitmaad ka dil se
      <br />
      shukriya. <Heart />
    </p>
    <div className="absolute right-[18px] bottom-1 flex items-center gap-2 text-2xl leading-8 text-[#93b0a4]">
      <time>2:51 pm</time>
      <svg className="h-6 w-8" viewBox="0 0 32 24" fill="none" stroke="currentColor" strokeWidth="2.500" aria-label="Delivered">
        <path d="M1 12l8.500 9L23.500 2M14 18l3 3L31 2" />
      </svg>
    </div>
  </article>
);

const Composer: React.FC = () => (
  <form className="mt-auto mr-[19px] mb-2.5 ml-[18px] flex items-end gap-4">
    <div className="flex h-[94px] min-w-0 flex-1 items-center rounded-full bg-[#20272b] pr-[26px] pl-6 text-[#8f979b]">
      <button type="button" aria-label="Stickers">
        <svg className="h-11 w-11" viewBox="0 0 44 44" fill="none" stroke="currentColor" strokeWidth="4">
          <path d="M16 4h12q12 0 12 12v9q-1 5-4 8l-5 5q-3 2-7 2H16Q4 40 4 28V16Q4 4 16 4z" />
          <path d="M25 40q-1-9 2-12 3-3 13-3" strokeWidth="3.500" />
          <circle cx="16" cy="17" r="3" fill="currentColor" stroke="none" />
          <circle cx="29" cy="17" r="3" fill="currentColor" stroke="none" />
          <path d="M13 25h15l-4 7q-8 1-11-7z" fill="currentColor" stroke="none" />
        </svg>
      </button>
      <span className="ml-[26px] h-12 w-[3px] shrink-0 bg-white" />
      <input
        type="text"
        aria-label="Message"
        placeholder="Message"
        className="h-16 min-w-0 flex-1 bg-transparent text-[35px] outline-none placeholder:text-[#8f979b]"
      />
      <button type="button" aria-label="Attach">
        <svg className="h-11 w-7" viewBox="0 0 28 44" fill="none" stroke="currentColor" strokeWidth="3.500">
          <path d="M25.500 11v19q0 11-11.500 11T2.500 30V13Q2.500 4 11 4t8.500 9v16q0 5.500-5.500 5.500T8.500 29V12" />
          <path d="M14 12v17" strokeWidth="2" />
        </svg>
      </button>
      <button type="button" className="ml-[60px]" aria-label="Camera">
        <svg className="h-11 w-11" viewBox="0 0 44 44" fill="none" stroke="currentColor" strokeWidth="4" strokeLinejoin="round">
          <path d="M4 10h8l4-5h12l4 5h8v28H4z" />
          <circle cx="22" cy="23.500" r="7" />
        </svg>
      </button>
    </div>
    <button
      type="button"
      aria-label="Record voice message"
      className="flex h-24 w-24 shrink-0 items-center justify-center rounded-full bg-[#fafafa]"
    >
      <svg className="h-10 w-8" viewBox="0 0 32 40" fill="none" stroke="#0b1014" strokeWidth="3">
        <rect x="10" y="1" width="12" height="25" rx="6" fill="#0b1014" stroke="none" />
        <path d="M3.500 19q0 12 12.500 12t12.500-12M16 31v8" />
      </svg>
    </button>
  </form>
);

const App: React.FC = () => {
  return (
    <div className="flex min-h-screen flex-col bg-[#0b1014] font-['Roboto',sans-serif]">
      <Header />
      <main className="relative flex flex-1 flex-col overflow-hidden">
        <Wallpaper />
        <div className="relative flex flex-1 flex-col">
          <span className="mt-5 self-center rounded-2xl bg-[#12181b] px-[18px] pt-3 pb-2 text-[25px] leading-8 font-medium text-[#8b9296]">
            Today
          </span>
          <p className="mx-[78px] mt-6 mb-5 rounded-2xl bg-[#12181b] px-5 py-3 text-center text-[26px] leading-[31px] text-[#f8d48a]">
            <svg className="mr-2 inline-block h-[18px] w-4 align-[-1px]" viewBox="0 0 16 20" aria-hidden="true">
              <path d="M4 9V6q0-4 4-4t4 4v3" fill="none" stroke="#f8d48a" strokeWidth="2" />
              <rect x="1" y="8" width="14" height="12" rx="1.500" fill="#f8d48a" />
              <circle cx="8" cy="14" r="1.800" fill="#12181b" />
            </svg>
            Messages and calls are end-to-end
            <br />
            encrypted. Only people in this chat can read,
            <br />
            listen to, or share them. <a href="#learn-more" className="font-bold">Learn more</a>
          </p>
          <IncomingMessage />
          <OutgoingMessage />
          <Composer />
        </div>
      </main>
      <footer className="flex h-8 justify-center bg-black pt-3">
        <div className="h-1.5 w-60 rounded-full bg-[#808080]" />
      </footer>
    </div>
  );
};

export default App;
